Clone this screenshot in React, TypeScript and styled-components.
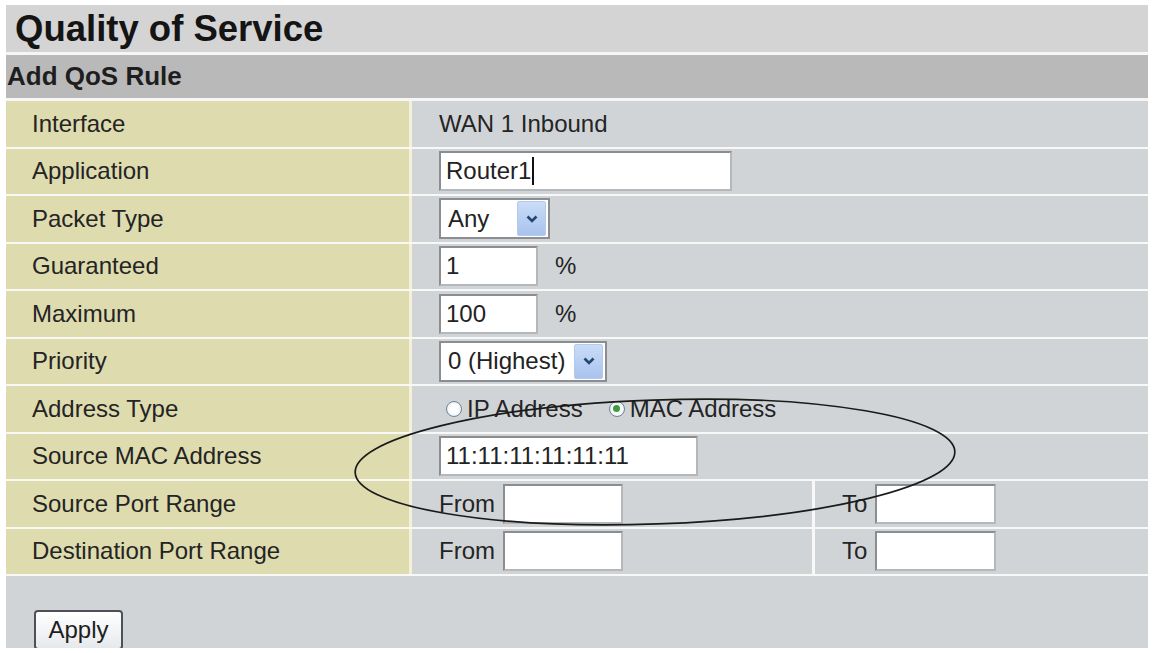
import React from "react";
import styled, { createGlobalStyle } from "styled-components";

const GlobalStyle = createGlobalStyle`
  html, body {
    margin: 0;
    padding: 0;
    background: #ffffff;
  }
  body {
    padding: 5px 0 0 6px;
    font-family: "Liberation Sans", Arial, sans-serif;
    color: #262626;
    overflow: hidden;
  }
`;

const Page = styled.div`
  position: relative;
  width: 1142px;
  height: 643px;
  overflow: hidden;
  background: #d1d4d7;
`;

const TitleBar = styled.div`
  height: 47px;
  display: flex;
  align-items: center;
  padding-left: 9px;
  background: #d4d4d4;
  border-bottom: 3px solid #f6f6f6;
  font-size: 36.5px;
  font-weight: bold;
  color: #141414;
`;

const SubHeader = styled.div`
  height: 43px;
  display: flex;
  align-items: center;
  padding-left: 1px;
  background: #b9b9b9;
  border-bottom: 3px solid #f6f6f6;
  font-size: 26px;
  font-weight: bold;
  color: #1e1e1e;
`;

const Row = styled.div`
  display: flex;
  height: 45.5px;
  border-bottom: 2px solid #f8f8f6;
`;

const Label = styled.div`
  width: 377px;
  flex: none;
  display: flex;
  align-items: center;
  padding-left: 26px;
  background: #dedbaf;
  border-right: 3px solid #f3f1dc;
  font-size: 24px;
  color: #242424;
`;

const Value = styled.div<{ $width?: number }>`
  ${({ $width }) => ($width ? `width: ${$width}px; flex: none;` : "flex: 1;")}
  display: flex;
  align-items: center;
  padding-left: 27px;
  background: #d1d4d7;
  font-size: 24px;
  color: #242424;
  & + & {
    border-left: 3px solid #f8f8f8;
  }
`;

const TextInput = styled.div<{ $width: number }>`
  width: ${({ $width }) => $width}px;
  height: 40px;
  flex: none;
  box-sizing: border-box;
  display: flex;
  align-items: center;
  padding-left: 5px;
  background: #ffffff;
  border: 2px solid #8a8e92;
  border-right-color: #b4b8bb;
  border-bottom-color: #b4b8bb;
  font-size: 24px;
  color: #222;
`;

const Caret = styled.span`
  display: inline-block;
  width: 2px;
  height: 28px;
  margin-left: 1px;
  background: #111;
`;

const Select = styled.div<{ $width: number }>`
  width: ${({ $width }) => $width}px;
  height: 41px;
  flex: none;
  box-sizing: border-box;
  display: flex;
  align-items: center;
  justify-content: space-between;
  padding: 2px 2px 2px 7px;
  background: #ffffff;
  border: 2px solid #8a8e92;
  font-size: 24px;
  white-space: nowrap;
  color: #222;
`;

const SelectArrow = styled.span`
  width: 27px;
  height: 33px;
  display: flex;
  align-items: center;
  justify-content: center;
  background: linear-gradient(#cadcf7, #a8c3ee);
  border: 1px solid #b5c9ea;
  border-radius: 2px;
`;

const Percent = styled.span`
  margin-left: 17px;
`;

const RadioWrap = styled.div`
  display: flex;
  align-items: center;
  margin-left: 7px;
`;

const RadioGroup = styled.label`
  display: flex;
  align-items: center;
  gap: 5px;
  & + & {
    margin-left: 26px;
  }
`;

const Radio = styled.span<{ $checked?: boolean }>`
  width: 16px;
  height: 16px;
  box-sizing: border-box;
  border-radius: 50%;
  border: 1px solid #6f8496;
  background: radial-gradient(circle, #ffffff 40%, #dce2e7 100%);
  display: flex;
  align-items: center;
  justify-content: center;
  &::after {
    content: "";
    width: 7px;
    height: 7px;
    border-radius: 50%;
    background: ${({ $checked }) => ($checked ? "#3c9e3c" : "transparent")};
  }
`;

const RangeLabel = styled.span`
  margin-right: 8px;
`;

const Footer = styled.div`
  padding: 34px 0 0 28px;
`;

const ApplyButton = styled.button`
  width: 89px;
  height: 40px;
  padding: 0;
  font-family: "Liberation Sans", Arial, sans-serif;
  font-size: 24px;
  color: #1e1e1e;
  background: linear-gradient(#ffffff, #e6e9ec);
  border: 2px solid #4d5155;
  border-radius: 4px;
`;

const Annotation = styled.svg`
  position: absolute;
  left: 0;
  top: 0;
  width: 1142px;
  height: 643px;
  pointer-events: none;
`;

const ChevronDown = () => (
  <svg width="14" height="10" viewBox="0 0 14 10">
    <path d="M2.5 2.5 L7 7 L11.5 2.5" fill="none" stroke="#23456e" strokeWidth="2.6" />
  </svg>
);

type Field = { label: string; value: React.ReactNode };

const fields: Field[] = [
  { label: "Interface", value: "WAN 1 Inbound" },
  {
    label: "Application",
    value: (
      <TextInput $width={293}>
        Router1
        <Caret />
      </TextInput>
    ),
  },
  {
    label: "Packet Type",
    value: (
      <Select $width={111}>
        Any
        <SelectArrow>
          <ChevronDown />
        </SelectArrow>
      </Select>
    ),
  },
  {
    label: "Guaranteed",
    value: (
      <>
        <TextInput $width={99}>1</TextInput>
        <Percent>%</Percent>
      </>
    ),
  },
  {
    label: "Maximum",
    value: (
      <>
        <TextInput $width={99}>100</TextInput>
        <Percent>%</Percent>
      </>
    ),
  },
  {
    label: "Priority",
    value: (
      <Select $width={168}>
        0 (Highest)
        <SelectArrow>
          <ChevronDown />
        </SelectArrow>
      </Select>
    ),
  },
  {
    label: "Address Type",
    value: (
      <RadioWrap>
        <RadioGroup>
          <Radio />
          IP Address
        </RadioGroup>
        <RadioGroup>
          <Radio $checked />
          MAC Address
        </RadioGroup>
      </RadioWrap>
    ),
  },
  {
    label: "Source MAC Address",
    value: <TextInput $width={259}>11:11:11:11:11:11</TextInput>,
  },
];

const portRows = ["Source Port Range", "Destination Port Range"];

const App: React.FC = () => (
  <>
    <GlobalStyle />
    <Page>
      <TitleBar>Quality of Service</TitleBar>
      <SubHeader>Add QoS Rule</SubHeader>
      {fields.map((f) => (
        <Row key={f.label}>
          <Label>{f.label}</Label>
          <Value>{f.value}</Value>
        </Row>
      ))}
      {portRows.map((label) => (
        <Row key={label}>
          <Label>{label}</Label>
          <Value $width={373}>
            <RangeLabel>From</RangeLabel>
            <TextInput $width={120} />
          </Value>
          <Value>
            <RangeLabel>To</RangeLabel>
            <TextInput $width={121} />
          </Value>
        </Row>
      ))}
      <Footer>
        <ApplyButton>Apply</ApplyButton>
      </Footer>
      <Annotation viewBox="0 0 1142 643">
        <ellipse
          cx="649"
          cy="457"
          rx="300"
          ry="62"
          transform="rotate(-2 649 457)"
          fill="none"
          stroke="#1a1a1a"
          strokeWidth="1.7"
        />
      </Annotation>
    </Page>
  </>
);

export default App;
